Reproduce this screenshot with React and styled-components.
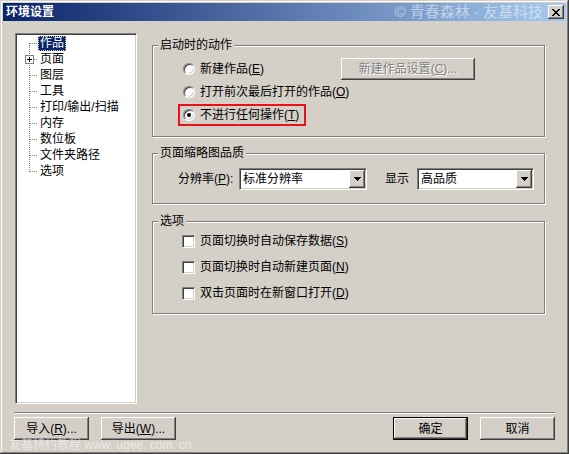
import styled, { createGlobalStyle } from "styled-components"

const GlobalStyle = createGlobalStyle`
  body { margin: 0; background: #fff; }
`

const FONT = `"Liberation Sans", "Noto Sans CJK SC", sans-serif`

const raised = `
  box-shadow: inset -1px -1px 0 #404040, inset 1px 1px 0 #fff,
    inset -2px -2px 0 #808080, inset 2px 2px 0 #d4d0c8;
`
const sunken = `
  border: 1px solid;
  border-color: #808080 #fff #fff #808080;
  box-shadow: inset 1px 1px 0 #404040, inset -1px -1px 0 #d4d0c8;
`

const Window = styled.div`
  position: relative;
  width: 569px;
  height: 454px;
  box-sizing: border-box;
  padding: 3px;
  background: #d4d0c8;
  box-shadow: inset -1px -1px 0 #404040, inset 1px 1px 0 #d4d0c8,
    inset -2px -2px 0 #808080, inset 2px 2px 0 #fff;
  font: 12px/14px ${FONT};
  color: #000;
  display: flex;
  flex-direction: column;
  overflow: hidden;
`

const TitleBar = styled.div`
  height: 18px;
  display: flex;
  align-items: center;
  padding: 0 2px;
  background: linear-gradient(to right, #0a246a, #a6caf0);
`

const Title = styled.span`
  color: #fff;
  font-weight: bold;
  font-size: 12px;
  padding-left: 1px;
`

const TitleMark = styled.span`
  margin-left: auto;
  margin-right: 5px;
  font-size: 15px;
  line-height: 18px;
  color: rgba(255, 255, 255, 0.5);
`

const CloseButton = styled.button`
  width: 16px;
  height: 14px;
  padding: 0;
  border: 0;
  background: #d4d0c8;
  ${raised}
  display: flex;
  align-items: center;
  justify-content: center;
`

const Main = styled.div`
  display: flex;
  padding: 12px 0 0 12px;
`

const Tree = styled.div`
  width: 122px;
  height: 371px;
  box-sizing: border-box;
  background: #fff;
  ${sunken}
  padding: 1px;
`

const TreeRow = styled.div`
  display: flex;
  align-items: center;
  height: 16px;
`

const TreeLabel = styled.span`
  height: 15px;
  line-height: 15px;
  padding: 0 2px;
  white-space: nowrap;
  background: ${(p) => (p.$selected ? "#0a246a" : "transparent")};
  color: ${(p) => (p.$selected ? "#fff" : "#000")};
  outline: ${(p) => (p.$selected ? "1px dotted #d4d0c8" : "none")};
  outline-offset: -1px;
`

const Side = styled.div`
  margin-left: 15px;
  padding-top: 5px;
  display: flex;
  flex-direction: column;
`

const Group = styled.fieldset`
  margin: ${(p) => p.$top || 0}px 0 0 0;
  padding: ${(p) => p.$pad};
  width: 393px;
  height: ${(p) => p.$h}px;
  box-sizing: border-box;
  min-inline-size: 0;
  border: 1px solid #808080;
  box-shadow: inset 1px 1px 0 #fff, 1px 1px 0 #fff;
`

const Legend = styled.legend`
  margin-left: 5px;
  padding: 0 2px;
  line-height: 14px;
  background: #d4d0c8;
`

const OptionList = styled.div`
  display: flex;
  flex-direction: column;
  align-items: flex-start;
  gap: 1px;
  padding-left: 25px;
`

const ButtonRow = styled.div`
  display: flex;
  align-items: center;
  justify-content: space-between;
  width: 297px;
`

const RadioOption = styled.label`
  display: inline-flex;
  align-items: center;
  gap: 5px;
  height: 22px;
  box-sizing: border-box;
  padding: 0 5px 0 3px;
  border: 2px solid ${(p) => (p.$highlight ? "#e8121a" : "transparent")};
  white-space: nowrap;
`

const RadioDot = styled.span`
  width: 12px;
  height: 12px;
  box-sizing: border-box;
  border-radius: 50%;
  background: #fff;
  ${sunken}
  display: flex;
  align-items: center;
  justify-content: center;
  &::after {
    content: "";
    width: 4px;
    height: 4px;
    border-radius: 50%;
    background: ${(p) => (p.$checked ? "#000" : "transparent")};
  }
`

const Button = styled.button`
  width: ${(p) => p.$w || 75}px;
  height: ${(p) => p.$h || 23}px;
  box-sizing: border-box;
  padding: 0;
  margin: 0;
  font: inherit;
  color: ${(p) => (p.disabled ? "#808080" : "#000")};
  text-shadow: ${(p) => (p.disabled ? "1px 1px 0 #fff" : "none")};
  background: #d4d0c8;
  border: ${(p) => (p.$default ? "1px solid #000" : "0")};
  ${raised}
  white-space: nowrap;
`

const FieldRow = styled.div`
  display: flex;
  align-items: center;
  padding: 8px 0 0 25px;
`

const FieldLabel = styled.span`
  width: ${(p) => p.$w}px;
  margin-left: ${(p) => p.$ml || 0}px;
  white-space: nowrap;
`

const Select = styled.div`
  width: ${(p) => p.$w}px;
  height: 22px;
  box-sizing: border-box;
  display: flex;
  align-items: center;
  background: #fff;
  ${sunken}
  padding: 1px;
`

const SelectText = styled.span`
  flex: 1;
  padding-left: 2px;
`

const DropButton = styled.span`
  width: 16px;
  height: 18px;
  background: #d4d0c8;
  ${raised}
  display: flex;
  align-items: center;
  justify-content: center;
`

const CheckList = styled.div`
  display: flex;
  flex-direction: column;
  padding-left: 29px;
`

const CheckRow = styled.label`
  display: flex;
  align-items: center;
  gap: 5px;
  height: 26px;
`

const CheckBox = styled.span`
  width: 13px;
  height: 13px;
  box-sizing: border-box;
  background: #fff;
  ${sunken}
`

const Separator = styled.div`
  margin: 8px 11px 0;
  border-top: 1px solid #808080;
  border-bottom: 1px solid #fff;
`

const ButtonBar = styled.div`
  display: flex;
  justify-content: space-between;
  margin: 3px 11px 0;
`

const ButtonGroup = styled.div`
  display: flex;
  gap: 12px;
`

const Watermark = styled.div`
  position: absolute;
  left: 9px;
  top: 437px;
  font-size: 12px;
  line-height: 16px;
  color: rgba(255, 255, 255, 0.55);
  white-space: nowrap;
`

const treeItems = [
  { label: "作品", selected: true },
  { label: "页面", expandable: true },
  { label: "图层" },
  { label: "工具" },
  { label: "打印/输出/扫描" },
  { label: "内存" },
  { label: "数位板" },
  { label: "文件夹路径" },
  { label: "选项" },
]

function Connector({ first, last, expandable }) {
  return (
    <svg width="21" height="16" style={{ flex: "none" }} shapeRendering="crispEdges">
      <line x1="12.5" y1={first ? 8 : 0} x2="12.5" y2={last ? 9 : 16} stroke="#808080" strokeDasharray="1 1" />
      <line x1="13" y1="8.5" x2="21" y2="8.5" stroke="#808080" strokeDasharray="1 1" />
      {expandable && (
        <g>
          <rect x="8.5" y="4.5" width="8" height="8" fill="#fff" stroke="#808080" />
          <line x1="10" y1="8.5" x2="15" y2="8.5" stroke="#000" />
          <line x1="12.5" y1="6" x2="12.5" y2="11" stroke="#000" />
        </g>
      )}
    </svg>
  )
}

function CloseIcon() {
  const px = [
    [0, 0], [1, 0], [6, 0], [7, 0],
    [1, 1], [2, 1], [5, 1], [6, 1],
    [2, 2], [3, 2], [4, 2], [5, 2],
    [3, 3], [4, 3],
    [2, 4], [3, 4], [4, 4], [5, 4],
    [1, 5], [2, 5], [5, 5], [6, 5],
    [0, 6], [1, 6], [6, 6], [7, 6],
  ]
  return (
    <svg width="8" height="7" shapeRendering="crispEdges">
      {px.map(([x, y], i) => (
        <rect key={i} x={x} y={y} width="1" height="1" fill="#000" />
      ))}
    </svg>
  )
}

function DownArrow() {
  return (
    <svg width="7" height="4" shapeRendering="crispEdges">
      <path d="M0 0h7v1h-1v1h-1v1h-1v1h-1v-1h-1v-1h-1v-1h-1z" fill="#000" />
    </svg>
  )
}

const App = () => {
  return (
    <>
      <GlobalStyle />
      <Window>
        <TitleBar>
          <Title>环境设置</Title>
          <TitleMark>© 青春森林 · 友基科技</TitleMark>
          <CloseButton>
            <CloseIcon />
          </CloseButton>
        </TitleBar>

        <Main>
          <Tree>
            {treeItems.map((item, i) => (
              <TreeRow key={item.label}>
                <Connector first={i === 0} last={i === treeItems.length - 1} expandable={item.expandable} />
                <TreeLabel $selected={item.selected}>{item.label}</TreeLabel>
              </TreeRow>
            ))}
          </Tree>

          <Side>
            <Group $h={99} $pad="6px 0 0 0">
              <Legend>启动时的动作</Legend>
              <OptionList>
                <ButtonRow>
                  <RadioOption>
                    <RadioDot />
                    <span>新建作品(<u>E</u>)</span>
                  </RadioOption>
                  <Button $w={134} $h={22} disabled>
                    新建作品设置(<u>C</u>)...
                  </Button>
                </ButtonRow>
                <RadioOption>
                  <RadioDot />
                  <span>打开前次最后打开的作品(<u>O</u>)</span>
                </RadioOption>
                <RadioOption $highlight>
                  <RadioDot $checked />
                  <span>不进行任何操作(<u>T</u>)</span>
                </RadioOption>
              </OptionList>
            </Group>

            <Group $top={9} $h={58} $pad="0">
              <Legend>页面缩略图品质</Legend>
              <FieldRow>
                <FieldLabel $w={61}>
                  分辨率(<u>P</u>):
                </FieldLabel>
                <Select $w={128}>
                  <SelectText>标准分辨率</SelectText>
                  <DropButton>
                    <DownArrow />
                  </DropButton>
                </Select>
                <FieldLabel $w={32} $ml={18}>
                  显示
                </FieldLabel>
                <Select $w={117}>
                  <SelectText>高品质</SelectText>
                  <DropButton>
                    <DownArrow />
                  </DropButton>
                </Select>
              </FieldRow>
            </Group>

            <Group $top={10} $h={100} $pad="0">
              <Legend>选项</Legend>
              <CheckList>
                <CheckRow>
                  <CheckBox />
                  <span>页面切换时自动保存数据(<u>S</u>)</span>
                </CheckRow>
                <CheckRow>
                  <CheckBox />
                  <span>页面切换时自动新建页面(<u>N</u>)</span>
                </CheckRow>
                <CheckRow>
                  <CheckBox />
                  <span>双击页面时在新窗口打开(<u>D</u>)</span>
                </CheckRow>
              </CheckList>
            </Group>
          </Side>
        </Main>

        <Separator />
        <ButtonBar>
          <ButtonGroup>
            <Button>导入(<u>R</u>)...</Button>
            <Button>导出(<u>W</u>)...</Button>
          </ButtonGroup>
          <ButtonGroup>
            <Button $default>确定</Button>
            <Button>取消</Button>
          </ButtonGroup>
        </ButtonBar>

        <Watermark>友基特约教程 www. ugee. com. cn</Watermark>
      </Window>
    </>
  )
}

export default App
